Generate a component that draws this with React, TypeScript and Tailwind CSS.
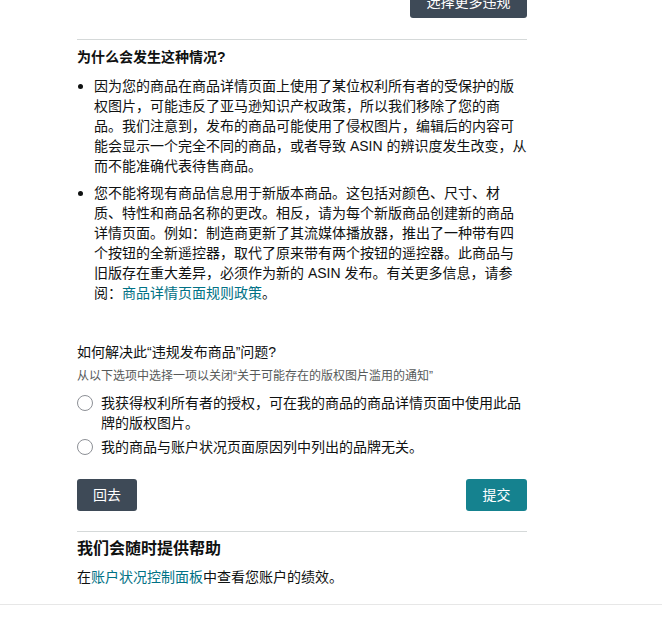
const font = {
  fontFamily: '"Liberation Sans", "Noto Sans CJK SC", sans-serif',
};

function Radio({ children }: { children: React.ReactNode }) {
  return (
    <label className="flex items-start gap-[8px] text-[14px] leading-[20px] text-[#0f1111]">
      <span className="mt-[2px] w-[16px] h-[16px] shrink-0 rounded-full border border-[#8d9096] bg-white" />
      <span>{children}</span>
    </label>
  );
}

function Bullet({ children }: { children: React.ReactNode }) {
  return (
    <li className="flex text-[14px] leading-[20px] text-[#0f1111]">
      <span className="w-[17px] shrink-0 flex pt-[8px] pl-[1px]">
        <span className="w-[5px] h-[5px] rounded-full bg-[#0f1111]" />
      </span>
      <span>{children}</span>
    </li>
  );
}

export default function App() {
  return (
    <div className="w-[662px] h-[619px] overflow-hidden bg-white" style={font}>
      <div className="w-[450px] ml-[77px]">
        <div className="flex justify-end -mt-[14px]">
          <button className="h-[32px] w-[117px] rounded-[3px] bg-[#3e4a57] text-white text-[14px]">
            选择更多违规
          </button>
        </div>

        <div className="mt-[21px] border-t border-[#d5d9d9]" />

        <h3 className="mt-[7px] text-[14px] leading-[20px] font-bold text-[#0f1111]">
          为什么会发生这种情况?
        </h3>

        <ul className="mt-[9px] flex flex-col gap-[7px]">
          <Bullet>
            因为您的商品在商品详情页面上使用了某位权利所有者的受保护的版权图片，可能违反了亚马逊知识产权政策，所以我们移除了您的商品。我们注意到，发布的商品可能使用了侵权图片，编辑后的内容可能会显示一个完全不同的商品，或者导致 ASIN 的辨识度发生改变，从而不能准确代表待售商品。
          </Bullet>
          <Bullet>
            您不能将现有商品信息用于新版本商品。这包括对颜色、尺寸、材质、特性和商品名称的更改。相反，请为每个新版商品创建新的商品详情页面。例如：制造商更新了其流媒体播放器，推出了一种带有四个按钮的全新遥控器，取代了原来带有两个按钮的遥控器。此商品与旧版存在重大差异，必须作为新的 ASIN 发布。有关更多信息，请参阅：
            <a className="text-[#007185]">商品详情页面规则政策</a>。
          </Bullet>
        </ul>

        <p className="mt-[39px] text-[14px] leading-[20px] text-[#0f1111]">
          如何解决此“违规发布商品”问题?
        </p>
        <p className="mt-[6px] text-[12px] leading-[16px] text-[#565959]">
          从以下选项中选择一项以关闭“关于可能存在的版权图片滥用的通知”
        </p>

        <div className="mt-[9px] flex flex-col gap-[4px]">
          <Radio>我获得权利所有者的授权，可在我的商品的商品详情页面中使用此品牌的版权图片。</Radio>
          <Radio>我的商品与账户状况页面原因列中列出的品牌无关。</Radio>
        </div>

        <div className="mt-[22px] flex justify-between">
          <button className="h-[32px] w-[60px] rounded-[3px] bg-[#3e4a57] text-white text-[14px]">
            回去
          </button>
          <button className="h-[32px] w-[61px] rounded-[3px] bg-[#15828f] text-white text-[14px]">
            提交
          </button>
        </div>

        <div className="mt-[20px] border-t border-[#d5d9d9]" />

        <h2 className="mt-[5px] text-[16px] leading-[24px] font-bold text-[#0f1111]">
          我们会随时提供帮助
        </h2>
        <p className="mt-[6px] text-[14px] leading-[20px] text-[#0f1111]">
          在<a className="text-[#007185]">账户状况控制面板</a>中查看您账户的绩效。
        </p>
      </div>

      <div className="mt-[17px] border-t border-[#e7e7e7]" />
    </div>
  );
}
